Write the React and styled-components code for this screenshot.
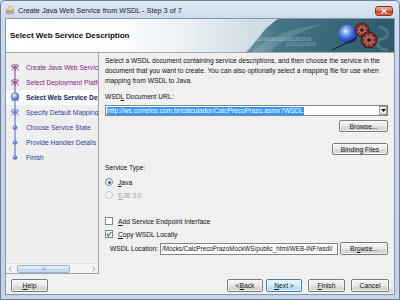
import React from "react";
import styled, { createGlobalStyle } from "styled-components";

const GlobalStyle = createGlobalStyle`
  html, body { margin: 0; padding: 0; width: 400px; height: 300px; overflow: hidden; background: #c6d6e8; }
  body { font-family: "Liberation Sans", Arial, sans-serif; }
  * { box-sizing: border-box; }
`;

const FS = "6.7px";

const Window = styled.div`
  width: 400px;
  height: 300px;
  display: flex;
  flex-direction: column;
  background: linear-gradient(180deg, #dfe8f2 0px, #cddbeb 17px, #c2d4e8 100%);
  border: 1px solid #6b7f96;
  border-radius: 5px 5px 0 0;
  padding: 0 4px 4px 4px;
`;

const TitleBar = styled.div`
  height: 17px;
  flex: none;
  display: flex;
  align-items: center;
  gap: 3px;
`;

const TitleText = styled.div`
  flex: 1;
  font-size: 7.3px;
  color: #1b1b1b;
  white-space: nowrap;
  padding-top: 2px;
`;

const CloseBtn = styled.div`
  align-self: flex-start;
  margin-top: 5px;
  margin-right: 2px;
  width: 18px;
  height: 10px;
  border: 1px solid #8a3424;
  border-radius: 3px;
  background: linear-gradient(180deg, #eeb1a2 0%, #dc7259 45%, #c6432a 55%, #d8705a 100%);
  display: flex;
  align-items: center;
  justify-content: center;
`;

const Client = styled.div`
  flex: 1;
  display: flex;
  flex-direction: column;
  border: 1px solid #8397ad;
  background: #f0f0f0;
  min-height: 0;
`;

const Banner = styled.div`
  height: 34px;
  flex: none;
  display: flex;
  border-bottom: 1px solid #a7a7a7;
  background: linear-gradient(90deg, #ffffff 0%, #fbfcfd 30%, #e7eef2 50%);
`;

const BannerTitle = styled.div`
  flex: 1;
  padding-left: 4px;
  display: flex;
  align-items: center;
  font-size: 8px;
  font-weight: bold;
  color: #0d0d0d;
`;

const Body = styled.div`
  height: 221px;
  flex: none;
  display: flex;
`;

const LeftPanel = styled.div`
  width: 93px;
  flex: none;
  display: flex;
  flex-direction: column;
  border-right: 1px solid #a3a3a3;
  border-bottom: 1px solid #a3a3a3;
  background: #efefef;
`;

const NavList = styled.div`
  flex: 1;
  padding-top: 7px;
  display: flex;
  flex-direction: column;
  overflow: hidden;
`;

const NavItem = styled.div`
  height: 15px;
  display: flex;
  align-items: center;
  gap: 3px;
  padding-left: 1px;
  background: ${(p) => (p.$selected ? "#ffffff" : "transparent")};
  white-space: nowrap;
  overflow: hidden;
`;

const NavText = styled.span`
  font-size: ${FS};
  color: ${(p) => (p.$state === "current" ? "#10205a" : p.$state === "visited" ? "#7c1f86" : "#2f3ba4")};
  font-weight: ${(p) => (p.$state === "current" ? "bold" : "normal")};
  text-decoration: ${(p) => (p.$state === "current" ? "none" : "underline")};
  overflow: hidden;
`;

const HScroll = styled.div`
  height: 10px;
  flex: none;
  display: flex;
  align-items: center;
  background: #f3f3f3;
  border-top: 1px solid #e0e0e0;
  padding: 0 2px;
  gap: 1px;
`;

const ScrollTrack = styled.div`
  flex: 1;
  height: 8px;
  display: flex;
  align-items: center;
`;

const ScrollThumb = styled.div`
  margin-left: 3px;
  width: 53px;
  height: 8px;
  border: 1px solid #93b4d6;
  border-radius: 2px;
  background: linear-gradient(180deg, #e8f1fb 0%, #d2e5f7 50%, #bcd7f2 51%, #c9def4 100%);
  display: flex;
  align-items: center;
  justify-content: center;
`;

const RightPane = styled.div`
  flex: 1;
  display: flex;
  flex-direction: column;
  padding: 3px 6px 0 6px;
  font-size: ${FS};
  color: #111;
`;

const Para = styled.div`
  line-height: 10px;
`;

const Label = styled.div`
  line-height: 10px;
  height: 10px;
  margin-top: ${(p) => p.$mt || 0}px;
  color: ${(p) => (p.$disabled ? "#a4a4a4" : "#111")};
`;

const Combo = styled.div`
  margin-top: 3px;
  height: 11px;
  display: flex;
  border: 1px solid #858585;
  background: #fff;
`;

const ComboText = styled.div`
  flex: 1;
  padding: 1px 1px;
  display: flex;
  align-items: center;
`;

const Selected = styled.span`
  background: #3399ff;
  color: #fff;
  line-height: 8px;
  padding-right: 1px;
  white-space: nowrap;
`;

const ComboButton = styled.div`
  width: 8px;
  border: 1px solid #9a9a9a;
  margin: 0;
  background: linear-gradient(180deg, #fbfbfb, #e2e2e2);
  display: flex;
  align-items: center;
  justify-content: center;
`;

const RightRow = styled.div`
  margin-top: ${(p) => p.$mt}px;
  display: flex;
  justify-content: flex-end;
`;

const Button = styled.div`
  width: ${(p) => p.$w}px;
  height: ${(p) => p.$h || 13}px;
  flex: none;
  display: flex;
  align-items: center;
  justify-content: center;
  font-size: ${FS};
  color: #111;
  border: 1px solid ${(p) => (p.$default ? "#3c7fb1" : "#7b7b7b")};
  border-radius: 2px;
  background: ${(p) =>
    p.$default
      ? "linear-gradient(180deg, #eaf6fd 0%, #d9f0fc 50%, #bee6fd 51%, #a7d9f5 100%)"
      : "linear-gradient(180deg, #f3f3f3 0%, #ebebeb 50%, #dddddd 51%, #cfcfcf 100%)"};
  box-shadow: inset 0 0 0 1px rgba(255, 255, 255, 0.7);
  white-space: nowrap;
`;

const OptionRow = styled.div`
  margin-top: ${(p) => p.$mt}px;
  height: 10px;
  display: flex;
  align-items: center;
  gap: 5px;
  color: ${(p) => (p.$disabled ? "#a4a4a4" : "#111")};
`;

const Radio = styled.span`
  width: 8px;
  height: 8px;
  border-radius: 50%;
  border: 1px solid ${(p) => (p.$disabled ? "#c4c4c4" : "#858585")};
  background: ${(p) => (p.$disabled ? "#f4f4f4" : "linear-gradient(135deg, #e4e4e4, #ffffff)")};
  display: flex;
  align-items: center;
  justify-content: center;
  flex: none;
  &::after {
    content: "";
    width: 3px;
    height: 3px;
    border-radius: 50%;
    background: ${(p) => (p.$checked ? "#2762c4" : "transparent")};
  }
`;

const Check = styled.span`
  width: 8px;
  height: 8px;
  border: 1px solid #858585;
  background: #fff;
  flex: none;
  display: flex;
  align-items: center;
  justify-content: center;
`;

const LocationRow = styled.div`
  margin-top: 3px;
  height: 13px;
  display: flex;
  align-items: center;
  padding-left: 5px;
  gap: 2px;
`;

const Field = styled.div`
  flex: 1;
  height: 12px;
  border: 1px solid #858585;
  background: #fff;
  display: flex;
  align-items: center;
  padding-left: 1px;
  white-space: nowrap;
  overflow: hidden;
  font-size: 6.3px;
`;

const FieldLabel = styled.span`
  white-space: nowrap;
`;

const Footer = styled.div`
  flex: 1;
  position: relative;
  display: flex;
  align-items: flex-start;
  padding: 5px 5px 0 5px;
  gap: 6px;
`;

const Spacer = styled.div`
  flex: 1;
`;

const PairGroup = styled.div`
  display: flex;
  gap: 3px;
`;

const Grip = styled.svg`
  position: absolute;
  right: 1px;
  bottom: 1px;
`;

const U = styled.u`
  text-decoration: underline;
`;

function CupIcon() {
  return (
    <svg width="10" height="11" viewBox="0 0 10 11">
      <path d="M4 1 C3 2.5 5 3 4 4.5" stroke="#c9a040" strokeWidth="0.8" fill="none" />
      <path d="M6 1.5 C5 3 7 3 6 4.5" stroke="#c9a040" strokeWidth="0.8" fill="none" />
      <path d="M1.5 5 L8.5 5 L7.8 8 L2.2 8 Z" fill="#e9b34a" stroke="#9a6d1e" strokeWidth="0.5" />
      <ellipse cx="5" cy="5" rx="3.5" ry="0.8" fill="#f6e1a8" />
      <ellipse cx="5" cy="8.8" rx="4.6" ry="1.3" fill="#b7bcc2" stroke="#7c8288" strokeWidth="0.4" />
    </svg>
  );
}

function BannerArt() {
  return (
    <svg width="200" height="33" viewBox="0 0 200 33" style={{ flex: "none", display: "block" }}>
      <defs>
        <linearGradient id="bgL" x1="0" x2="1" y1="0" y2="0">
          <stop offset="0" stopColor="#e7eef2" />
          <stop offset="0.3" stopColor="#cfdde4" />
          <stop offset="1" stopColor="#c0d3dc" />
        </linearGradient>
        <linearGradient id="dark" x1="0" x2="1" y1="0" y2="0">
          <stop offset="0" stopColor="#6d97a7" />
          <stop offset="0.2" stopColor="#467686" />
          <stop offset="1" stopColor="#2c5b6c" />
        </linearGradient>
        <radialGradient id="globe" cx="0.38" cy="0.35" r="0.7">
          <stop offset="0" stopColor="#ffffff" />
          <stop offset="0.2" stopColor="#8fb4f5" />
          <stop offset="0.6" stopColor="#2f5fd2" />
          <stop offset="1" stopColor="#0e2a7a" />
        </radialGradient>
        <radialGradient id="reel" cx="0.5" cy="0.5" r="0.5">
          <stop offset="0" stopColor="#e7c7c0" />
          <stop offset="0.6" stopColor="#b0554a" />
          <stop offset="1" stopColor="#5a1a16" />
        </radialGradient>
      </defs>
      <rect width="200" height="33" fill="url(#bgL)" />
      <path d="M52 33 C62 24 68 10 84 0 L200 0 L200 33 Z" fill="url(#dark)" />
      <path d="M58 33 C72 20 92 10 130 5 C104 13 86 22 76 33 Z" fill="#ffffff" opacity="0.15" />
      <path d="M185 8 C196 10 196 18 188 20 C180 22 182 30 194 31" stroke="#ffffff" strokeOpacity="0.15" strokeWidth="3" fill="none" />
      <text x="42" y="22" fontSize="5" fill="#eaf2f5" opacity="0.45" fontFamily="Liberation Mono, monospace">
        0101010101010101010101010
      </text>
      <text x="92" y="27" fontSize="4.5" fill="#eaf2f5" opacity="0.35" fontFamily="Liberation Mono, monospace">
        01010101010
      </text>
      <circle cx="154" cy="15" r="9.5" fill="url(#globe)" />
      <line x1="138" y1="31" x2="163" y2="19" stroke="#111" strokeWidth="0.9" />
      <g>
        <circle cx="168" cy="11" r="7" fill="url(#reel)" stroke="#3a0e0c" strokeWidth="0.6" />
        <circle cx="168" cy="11" r="1.6" fill="#3a0e0c" />
        <path d="M168 5 L168 17 M162 11 L174 11 M164 7 L172 15 M172 7 L164 15" stroke="#3a0e0c" strokeWidth="0.6" />
        <circle cx="175" cy="21" r="8" fill="url(#reel)" stroke="#3a0e0c" strokeWidth="0.6" />
        <circle cx="175" cy="21" r="1.8" fill="#3a0e0c" />
        <path d="M175 14 L175 28 M168 21 L182 21 M170 16 L180 26 M180 16 L170 26" stroke="#3a0e0c" strokeWidth="0.6" />
      </g>
    </svg>
  );
}

const PURPLE = "#8b3a98";
const BLUE = "#3f6fbd";

function NavIcon({ kind, top, bottom }) {
  const color = kind === "visited" ? PURPLE : BLUE;
  return (
    <svg width="16" height="15" viewBox="0 0 16 15" style={{ flex: "none" }}>
      {top && <line x1="8" y1="0" x2="8" y2="7.5" stroke={top} strokeWidth="1" />}
      {bottom && <line x1="8" y1="7.5" x2="8" y2="15" stroke={bottom} strokeWidth="1" />}
      {(kind === "visited" || kind === "mapping") && (
        <g>
          <ellipse cx="8" cy="6" rx="3.8" ry="1.6" fill={kind === "visited" ? "#c9a0d2" : "#a8c0ea"} stroke={color} strokeWidth="0.5" />
          <path d="M8 6 L4.5 10.5 M8 6 L11.5 10.5 M8 6 L8 11" stroke={color} strokeWidth="0.9" fill="none" />
        </g>
      )}
      {kind === "current" && (
        <g>
          <defs>
            <radialGradient id="cur" cx="0.4" cy="0.35" r="0.7">
              <stop offset="0" stopColor="#ffffff" />
              <stop offset="0.35" stopColor="#9ab9ea" />
              <stop offset="1" stopColor="#2d5bb0" />
            </radialGradient>
          </defs>
          <path d="M8 7 L4.5 11.5 M8 7 L11.5 11.5" stroke={BLUE} strokeWidth="0.9" />
          <circle cx="8" cy="6.5" r="4" fill="url(#cur)" stroke="#3a64b0" strokeWidth="0.4" />
        </g>
      )}
      {kind === "future" && (
        <g>
          <line x1="5.5" y1="8" x2="10.5" y2="8" stroke="#9ab5e3" strokeWidth="1" />
          <circle cx="8" cy="7.5" r="2.2" fill="#4f7fcf" />
          <circle cx="7.4" cy="6.9" r="0.8" fill="#cfe0f8" />
        </g>
      )}
    </svg>
  );
}

const steps = [
  { label: "Create Java Web Service from WSDL", kind: "visited", state: "visited", top: null, bottom: PURPLE },
  { label: "Select Deployment Platform", kind: "visited", state: "visited", top: PURPLE, bottom: PURPLE },
  { label: "Select Web Service Description", kind: "current", state: "current", top: PURPLE, bottom: BLUE },
  { label: "Specify Default Mapping Options", kind: "mapping", state: "future", top: BLUE, bottom: BLUE },
  { label: "Choose Service State", kind: "future", state: "future", top: BLUE, bottom: BLUE },
  { label: "Provide Handler Details", kind: "future", state: "future", top: BLUE, bottom: BLUE },
  { label: "Finish", kind: "future", state: "future", top: BLUE, bottom: null },
];

function Chevron({ dir }) {
  return (
    <svg width="5" height="6" viewBox="0 0 5 6" style={{ flex: "none" }}>
      <path d={dir === "left" ? "M3.5 0.5 L1 3 L3.5 5.5" : "M1.5 0.5 L4 3 L1.5 5.5"} stroke="#8a8a8a" strokeWidth="0.8" fill="none" />
    </svg>
  );
}

export default function App() {
  return (
    <>
      <GlobalStyle />
      <Window>
        <TitleBar>
          <CupIcon />
          <TitleText>Create Java Web Service from WSDL - Step 3 of 7</TitleText>
          <CloseBtn>
            <svg width="8" height="6" viewBox="0 0 8 6">
              <path d="M1.5 0.8 L6.5 5.2 M6.5 0.8 L1.5 5.2" stroke="#ffffff" strokeWidth="1.4" />
            </svg>
          </CloseBtn>
        </TitleBar>
        <Client>
          <Banner>
            <BannerTitle>Select Web Service Description</BannerTitle>
            <BannerArt />
          </Banner>
          <Body>
            <LeftPanel>
              <NavList>
                {steps.map((s) => (
                  <NavItem key={s.label} $selected={s.state === "current"}>
                    <NavIcon kind={s.kind} top={s.top} bottom={s.bottom} />
                    <NavText $state={s.state}>{s.label}</NavText>
                  </NavItem>
                ))}
              </NavList>
              <HScroll>
                <Chevron dir="left" />
                <ScrollTrack>
                  <ScrollThumb>
                    <svg width="4" height="4" viewBox="0 0 4 4">
                      <path d="M1 0.5 V3.5 M2 0.5 V3.5 M3 0.5 V3.5" stroke="#6f95c0" strokeWidth="0.5" />
                    </svg>
                  </ScrollThumb>
                </ScrollTrack>
                <Chevron dir="right" />
              </HScroll>
            </LeftPanel>
            <RightPane>
              <Para>
                Select a WSDL document containing service descriptions, and then choose the service in the
                document that you want to create. You can also optionally select a mapping file for use when
                mapping from WSDL to Java.
              </Para>
              <Label $mt={6}>
                WSD<U>L</U> Document URL:
              </Label>
              <Combo>
                <ComboText>
                  <Selected>http://ws.correios.com.br/calculador/CalcPrecoPrazo.asmx?WSDL</Selected>
                </ComboText>
                <ComboButton>
                  <svg width="5" height="3" viewBox="0 0 5 3">
                    <path d="M0 0 L5 0 L2.5 3 Z" fill="#111" />
                  </svg>
                </ComboButton>
              </Combo>
              <RightRow $mt={4}>
                <Button $w={49} $h={12}>Browse...</Button>
              </RightRow>
              <RightRow $mt={11}>
                <Button $w={56} $h={12}>Binding Files</Button>
              </RightRow>
              <Label $mt={8}>Service Type:</Label>
              <OptionRow $mt={4}>
                <Radio $checked />
                <span>
                  <U>J</U>ava
                </span>
              </OptionRow>
              <OptionRow $mt={3} $disabled>
                <Radio $disabled />
                <span>
                  <U>E</U>JB 3.0
                </span>
              </OptionRow>
              <OptionRow $mt={16}>
                <Check />
                <span>
                  <U>A</U>dd Service Endpoint Interface
                </span>
              </OptionRow>
              <OptionRow $mt={3}>
                <Check>
                  <svg width="6" height="6" viewBox="0 0 6 6">
                    <path d="M0.8 3 L2.4 4.8 L5.3 1" stroke="#2a5bb8" strokeWidth="1.2" fill="none" />
                  </svg>
                </Check>
                <span>
                  <U>C</U>opy WSDL Locally
                </span>
              </OptionRow>
              <LocationRow>
                <FieldLabel>WSDL Location:</FieldLabel>
                <Field>/Mocks/CalcPrecoPrazoMockWS/public_html/WEB-INF/wsdl/</Field>
                <Button $w={48}>
                  Br<U>o</U>wse...
                </Button>
              </LocationRow>
            </RightPane>
          </Body>
          <Footer>
            <Button $w={37}>
              <U>H</U>elp
            </Button>
            <Spacer />
            <PairGroup>
              <Button $w={36}>
                &lt; <U>B</U>ack
              </Button>
              <Button $w={36} $default>
                <U>N</U>ext &gt;
              </Button>
            </PairGroup>
            <Button $w={37}>
              <U>F</U>inish
            </Button>
            <Button $w={38}>Cancel</Button>
            <Grip width="6" height="6" viewBox="0 0 6 6">
              <g fill="#9a9a9a">
                <rect x="4.5" y="0.5" width="1" height="1" />
                <rect x="2.5" y="2.5" width="1" height="1" />
                <rect x="4.5" y="2.5" width="1" height="1" />
                <rect x="0.5" y="4.5" width="1" height="1" />
                <rect x="2.5" y="4.5" width="1" height="1" />
                <rect x="4.5" y="4.5" width="1" height="1" />
              </g>
            </Grip>
          </Footer>
        </Client>
      </Window>
    </>
  );
}
